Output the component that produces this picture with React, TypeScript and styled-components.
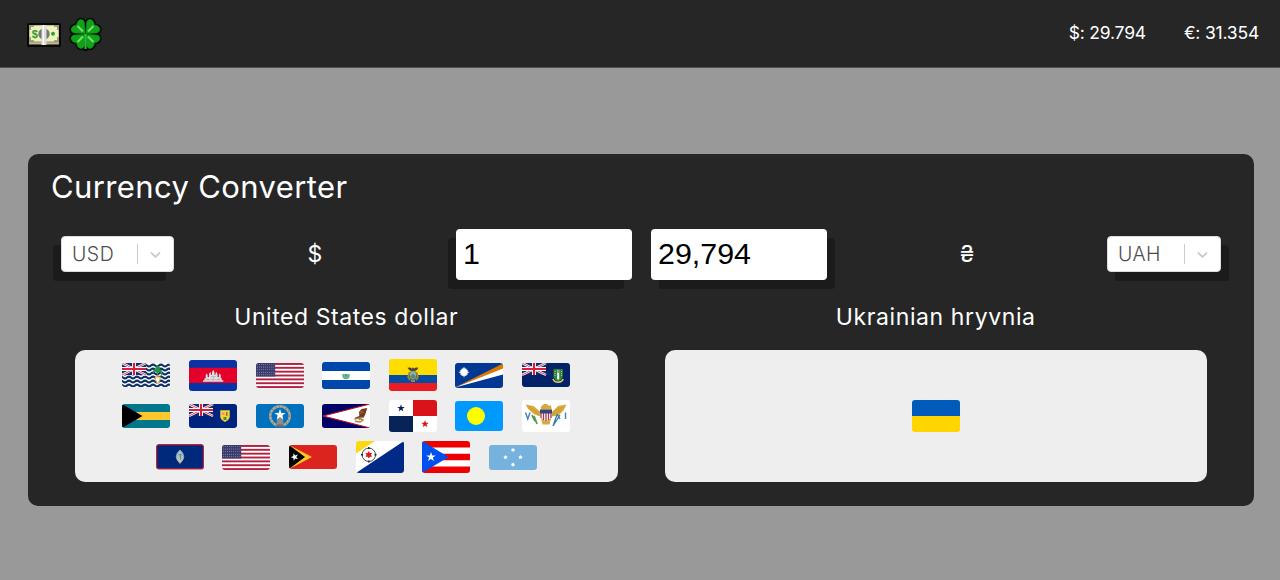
import React from "react";
import styled, { createGlobalStyle } from "styled-components";

const GlobalStyle = createGlobalStyle`
  * { box-sizing: border-box; }
  body {
    margin: 0;
    background: #999;
    color: #fff;
    font-family: Inter, "Open Sans", sans-serif;
  }
`;

const Page = styled.div`
  min-height: 580px;
  overflow: hidden;
`;

const Header = styled.header`
  display: flex;
  align-items: center;
  justify-content: space-between;
  height: 68px;
  padding: 0 21px 0 26px;
  background: #262626;
  border-bottom: 1px solid #505050;
`;

const Logo = styled.div`
  display: flex;
  align-items: center;
  gap: 6px;
  padding-top: 2px;
  svg { display: block; }
`;

const Rates = styled.div`
  display: flex;
  gap: 38px;
  padding-bottom: 3px;
`;

const Rate = styled.span<{ $spacing: number }>`
  font-size: 17.5px;
  font-weight: 400;
  white-space: nowrap;
  letter-spacing: ${(p) => p.$spacing}px;
`;

const Card = styled.main`
  margin: 86px 26px 0 28px;
  height: 351.5px;
  padding: 13px 24px 24px;
  border-radius: 10px;
  background: #262626;
`;

const Title = styled.h1`
  margin: 0;
  height: 40px;
  line-height: 39px;
  font-size: 31px;
  font-weight: 400;
  letter-spacing: 0.38px;
  text-indent: -1px;
`;

const Controls = styled.div`
  display: flex;
  align-items: center;
  justify-content: space-between;
  height: 51px;
  margin: 22px 9px 0;
`;

const Side = styled.div<{ $reverse?: boolean }>`
  display: flex;
  flex: 1 1 0;
  flex-direction: ${(p) => (p.$reverse ? "row-reverse" : "row")};
  align-items: center;
  justify-content: space-between;
  &:first-child { flex-basis: 1px; margin-right: 19px; }
`;

const Select = styled.button<{ $shadow: number }>`
  display: flex;
  align-items: center;
  width: ${(p) => (p.$shadow > 0 ? 114 : 113)}px;
  height: 36px;
  margin-bottom: 1px;
  padding: 0 9px 0 10px;
  border: 1px solid #ddd;
  border-radius: 4px;
  background: #fff;
  color: #4d4d4d;
  font: 300 19.5px Inter, sans-serif;
  letter-spacing: 0.5px;
  box-shadow: ${(p) => p.$shadow}px 9px 0 #1b1b1b;
`;

const Code = styled.span`
  flex: 1;
  text-align: left;
`;

const Divider = styled.span`
  width: 1px;
  height: 20px;
  margin-right: 9px;
  background: #ccc;
`;

const Sign = styled.span`
  font-size: 23px;
  line-height: 30px;
  margin-bottom: 1px;
`;

const Amount = styled.input<{ $shadow: number }>`
  width: 176px;
  height: 51px;
  padding: 0 7px 2px;
  border: 0;
  border-radius: 4px;
  outline: 0;
  background: #fff;
  color: #000;
  font: 30.4px "Liberation Sans", Arial, sans-serif;
  box-shadow: ${(p) => p.$shadow}px 9px 0 #1b1b1b;
`;

const Details = styled.div`
  display: grid;
  grid-template-columns: 1fr 1fr;
  gap: 47px;
  padding: 0 23px;
  margin-top: 22px;
`;

const Name = styled.h2<{ $spacing: number }>`
  margin: 0 0 17px;
  height: 31px;
  line-height: 31px;
  text-align: center;
  font-size: 23px;
  font-weight: 400;
  letter-spacing: ${(p) => p.$spacing}px;
`;

const FlagPanel = styled.div`
  display: flex;
  flex-wrap: wrap;
  align-content: center;
  justify-content: center;
  gap: 9px 18.6px;
  height: 132px;
  padding: 0 40px;
  border-radius: 10px;
  background: #eee;
`;

const FlagSlot = styled.div`
  display: flex;
  align-items: center;
  width: 48px;
  height: 32px;
`;

const FlagSvg = styled.svg`
  display: block;
  border-radius: 3px;
`;

const star = (cx: number, cy: number, r: number, n = 5, inner = 0.4, rot = 0) =>
  Array.from({ length: n * 2 }, (_, i) => {
    const a = (Math.PI * i) / n - Math.PI / 2 + rot;
    const q = i % 2 ? r * inner : r;
    return `${(cx + q * Math.cos(a)).toFixed(2)},${(cy + q * Math.sin(a)).toFixed(2)}`;
  }).join(" ");

const UnionJack = () => (
  <g>
    <path d="M0 0h24v12H0z" fill="#1a2a72" />
    <path d="M0 0L24 12M24 0L0 12" stroke="#fff" strokeWidth="2.5" />
    <path d="M0 0L24 12M24 0L0 12" stroke="#d5304c" strokeWidth="0.9" />
    <path d="M12 0v12M0 6h24" stroke="#fff" strokeWidth="4" />
    <path d="M12 0v12M0 6h24" stroke="#d5203c" strokeWidth="2.2" />
  </g>
);

const Usa = () => (
  <g>
    <path d="M0 0h48v25H0z" fill="#fff" />
    {[0, 1, 2, 3, 4, 5, 6].map((i) => (
      <rect key={i} y={i * 3.85} width="48" height="1.92" fill="#b22240" />
    ))}
    <path d="M0 0h19.2v13.4H0z" fill="#3c3b6e" />
    {Array.from({ length: 45 }, (_, i) => (
      <circle key={i} cx={1.3 + (i % 9) * 2.08} cy={1.4 + Math.floor(i / 9) * 2.6} r="0.45" fill="#c4c3da" />
    ))}
  </g>
);

type Country = { h: number; art: React.ReactNode };

const flags: Record<string, Country> = {
  io: {
    h: 24,
    art: (
      <g>
        <path d="M0 0h48v24H0z" fill="#fff" />
        {[1.5, 5.5, 9.5, 13.5, 17.5, 21.5].map((y) => (
          <path
            key={y}
            d={`M-3 ${y}q2 -1.8 4 0t4 0t4 0t4 0t4 0t4 0t4 0t4 0t4 0t4 0t4 0t4 0t4 0`}
            transform="translate(0 1)"
            stroke="#0d3164"
            strokeWidth="2"
            fill="none"
          />
        ))}
        <UnionJack />
        <path d="M35.7 8v9" stroke="#8b6a35" strokeWidth="1.2" />
        <path d="M35.5 8q-3-3-4 1q3-2 4 1q2-4 4 1q1-5-3-3q2-4-1-5q-3 2 0 6" fill="#279348" stroke="#279348" strokeWidth="1.3" />
        <path d="M33 14h5.5l-1 4-1.8 3-1.7-3z" fill="#fff" stroke="#e6a251" strokeWidth="1" />
        <path d="M34.4 14l1.3-2 1.3 2z" fill="#e88627" />
      </g>
    ),
  },
  kh: {
    h: 31,
    art: (
      <g>
        <path d="M0 0h48v31H0z" fill="#0932a5" />
        <path d="M0 7.8h48v15.2H0z" fill="#e4002b" />
        <path d="M14 21.7v-1.5h1.5v-2h1.2v-3l1-2 1 2v1.8h1.3v-3l1.2-2.2 1 2.2v1h.8v-3l1.3-2 1.2 2v3h.8v-1l1-2.2 1.2 2.2v3h1.3v-1.8l1-2 1 2v3h1v2h1.5v1.5z" fill="#e0e0e0" />
        <path d="M16 19.7h16.5M22 16.5h5M19 18v3M24.3 17v4M29.8 18v3" stroke="#a4a4aa" strokeWidth=".55" />
      </g>
    ),
  },
  us: { h: 25, art: <Usa /> },
  sv: {
    h: 27,
    art: (
      <g>
        <path d="M0 0h48v27H0z" fill="#0047ab" />
        <path d="M0 9h48v9H0z" fill="#fff" />
        <path d="M21 12q-.7 4.500 3 4.700q3.700-.2 3-4.700" fill="#7fc49a" stroke="#55a877" strokeWidth="1.200" />
        <path d="M22.500 14.500l1.500-3 1.500 3z" fill="#438c75" />
      </g>
    ),
  },
  ec: {
    h: 32,
    art: (
      <g>
        <path d="M0 0h48v32H0z" fill="#ffdd00" />
        <path d="M0 16h48v8H0z" fill="#034ea2" />
        <path d="M0 24h48v8H0z" fill="#ed1c24" />
        <path d="M18.5 8.800q3-1 4.500 1q1-3 2 0q1.500-2 4.500-1q-1.500 3-4 3.500h-3q-2.500-.8-4-3.500" fill="#4b4330" />
        <path d="M20.300 13l-1.300 5 2 3M27.700 13l1.300 5-2 3" fill="none" stroke="#b78a2d" strokeWidth="1.400" />
        <ellipse cx="24" cy="16.200" rx="3.500" ry="4.300" fill="#88b4c6" stroke="#7a6931" strokeWidth=".8" />
        <path d="M21.300 17.500l2.700-3 2.800 3-1 2h-3.500z" fill="#5a8b62" />
        <path d="M22 22h4" stroke="#c8994b" strokeWidth="1.300" />
      </g>
    ),
  },
  mh: {
    h: 25,
    art: (
      <g>
        <path d="M0 0h48v25H0z" fill="#003893" />
        <path d="M0 24.500L48 .5v6z" fill="#dd7500" />
        <path d="M0 24.500L48 5.500v6z" fill="#fff" />
        <polygon points={star(9, 9.2, 4.6, 12, 0.75)} fill="#fff" />
        <path d="M9 4v10.400M3.800 9.200h10.400" stroke="#fff" strokeWidth=".7" />
      </g>
    ),
  },
  vg: {
    h: 24,
    art: (
      <g>
        <path d="M0 0h48v24H0z" fill="#012169" />
        <UnionJack />
        <path d="M31.500 6h9.300v7.500q-.5 3.500-4.700 5.300q-4.100-1.800-4.600-5.300z" fill="#278442" />
        <path d="M36.200 7.500v9" stroke="#fff" strokeWidth="2" />
        <path d="M36.200 8v2" stroke="#b77a4e" strokeWidth="1.500" />
        <path d="M33 8v6M39.500 8v6" stroke="#dfc653" strokeWidth="1" strokeDasharray="1 1" />
        <path d="M31 16q1 3 5.200 3.300q4-.3 5.100-3.300" fill="none" stroke="#dfc653" strokeWidth="1.500" />
      </g>
    ),
  },
  bs: {
    h: 24,
    art: (
      <g>
        <path d="M0 0h48v24H0z" fill="#00778b" />
        <path d="M0 8h48v8H0z" fill="#ffc72c" />
        <path d="M0 0l20.500 12L0 24z" />
      </g>
    ),
  },
  tc: {
    h: 24,
    art: (
      <g>
        <path d="M0 0h48v24H0z" fill="#00247d" />
        <UnionJack />
        <path d="M31.500 6.500h9v6.500q-.6 3-4.500 4.800q-4-1.800-4.500-4.800z" fill="#f5d327" stroke="#e0cc76" strokeWidth=".5" />
        <path d="M33 8.500h2.500v2.500H33z" fill="#dc9687" />
        <path d="M37 8h1.500v4H37z" fill="#b56532" />
        <path d="M34.500 13h3v3h-3z" fill="#478f42" />
      </g>
    ),
  },
  mp: {
    h: 24,
    art: (
      <g>
        <path d="M0 0h48v24H0z" fill="#0071bc" />
        <circle cx="24" cy="12" r="9.800" fill="none" stroke="#b6a991" strokeWidth="2.500" />
        <circle cx="24" cy="12" r="9.800" fill="none" stroke="#6e858f" strokeWidth="1.200" strokeDasharray="1.500 2.200" />
        <path d="M21.500 9.500h5l1 11h-7z" fill="#8c8c8c" />
        <path d="M20.500 20.500h7V23h-7z" fill="#686b70" />
        <polygon points={star(24, 10.8, 5.8)} fill="#fff" />
      </g>
    ),
  },
  as: {
    h: 24,
    art: (
      <g>
        <path d="M0 0h48v24H0z" fill="#000066" />
        <path d="M48 0L1 12l47 12z" fill="#fff" stroke="#bd1021" strokeWidth="1.200" />
        <path d="M48 1v22" stroke="#fff" strokeWidth="2" />
        <path d="M37 8l2.500-3 5.700-1-1.400 5-2 4.500-5 .5-4 1.500.5-2 4-1.500z" fill="#6e3b23" />
        <path d="M32.500 15l5-1 3.500 2-3 2-5-.7M37 16l3-3" fill="none" stroke="#a98245" strokeWidth="1.500" />
        <path d="M38 8l3-1M37 10l5-2" stroke="#c48a4b" strokeWidth=".5" />
      </g>
    ),
  },
  pa: {
    h: 32,
    art: (
      <g>
        <path d="M0 0h48v32H0z" fill="#fff" />
        <path d="M24 0h24v16H24z" fill="#da121a" />
        <path d="M0 16h24v16H0z" fill="#072357" />
        <polygon points={star(12, 8.2, 4)} fill="#072357" />
        <polygon points={star(36, 24, 4)} fill="#da121a" />
      </g>
    ),
  },
  pw: {
    h: 30,
    art: (
      <g>
        <path d="M0 0h48v30H0z" fill="#0099ff" />
        <circle cx="21" cy="15" r="9" fill="#ffff00" />
      </g>
    ),
  },
  vi: {
    h: 32,
    art: (
      <g>
        <path d="M0 0h48v32H0z" fill="#fff" />
        <path d="M3.500 4.500l8 1.500 7 6 .500-5.500 3-2.500h3l2 2 2-1 1 7 6-6 8.500-1.500-3 6-5 5-7 1-2 8h-7l-2-8-6-2-6-5z" fill="#d8aa3d" />
        <path d="M7 7l11 6M9 10l9 5M41 7l-11 6M39 10l-9 5" stroke="#b9902f" strokeWidth=".5" />
        <path d="M18 9.500h12v5.500q-.5 4-6 6q-5.500-2-6-6z" fill="#fff" />
        <path d="M19 13v5M21.500 13v7M24 13v8M26.500 13v7M29 13v5" stroke="#a23d51" strokeWidth="1.300" />
        <path d="M18 9.500h12v4H18z" fill="#39427a" />
        <path d="M12 16l3 8M10 15l3 6" stroke="#549b54" strokeWidth="1.800" />
        <path d="M35 15l-4 11M38 15l-7 11M35 14l3 5" stroke="#347aa6" strokeWidth="1.300" />
        <path d="M3.500 12.500l2.300 6.500L8 12.500M43.500 12.500v6.500" fill="none" stroke="#3c89b5" strokeWidth="1.400" />
      </g>
    ),
  },
  gu: {
    h: 25.5,
    art: (
      <g>
        <rect x=".6" y=".6" width="46.800" height="24.300" rx="2" fill="#00297b" stroke="#c62139" strokeWidth="1.200" />
        <path d="M24 6q7.500 6.500 0 13.500q-7.500-7 0-13.500" fill="#94c8dd" stroke="#b5acac" strokeWidth=".8" />
        <path d="M21.300 14.500q2.500-1 5.500 0l-2.800 4z" fill="#d8c49a" />
        <path d="M24.500 16V10M22.500 11q2.500-2 3.500.5" stroke="#4c7a58" strokeWidth=".7" fill="none" />
      </g>
    ),
  },
  tl: {
    h: 24,
    art: (
      <g>
        <path d="M0 0h48v24H0z" fill="#dc241f" />
        <path d="M0 0l23 12L0 24z" fill="#ffc726" />
        <path d="M0 0l16 12L0 24z" />
        <polygon points={star(5.7, 12, 4, 5, 0.4, -0.35)} fill="#fff" />
      </g>
    ),
  },
  bq: {
    h: 32,
    art: (
      <g>
        <path d="M0 0h48v32H0z" fill="#fff" />
        <path d="M48 0v32H0z" fill="#012a87" />
        <path d="M0 0h19L0 12.500z" fill="#f9d90f" />
        <circle cx="12.800" cy="13.800" r="6.700" fill="none" stroke="#333" strokeWidth=".9" />
        <path d="M12.800 6v2M12.800 19.500v2M5 13.800h2M18.500 13.800h2" stroke="#222" strokeWidth="1.500" />
        <polygon points={star(12.8, 13.8, 3.8, 6, 0.58)} fill="#dc171d" />
      </g>
    ),
  },
  pr: {
    h: 32,
    art: (
      <g>
        <path d="M0 0h48v32H0z" fill="#ed0000" />
        <path d="M0 6.400h48v6.400H0zM0 19.200h48v6.400H0z" fill="#fff" />
        <path d="M0 0l26.500 16L0 32z" fill="#0050f0" />
        <polygon points={star(9, 16, 5)} fill="#fff" />
      </g>
    ),
  },
  fm: {
    h: 25,
    art: (
      <g>
        <path d="M0 0h48v25H0z" fill="#75b2dd" />
        {[[24, 5], [31.5, 12.3], [24, 19.6], [16.5, 12.3]].map(([x, y]) => (
          <polygon key={`${x}-${y}`} points={star(x, y, 2.2, 5, 0.6)} fill="#fff" />
        ))}
      </g>
    ),
  },
  ua: {
    h: 32,
    art: (
      <g>
        <path d="M0 0h48v16H0z" fill="#005bbb" />
        <path d="M0 16h48v16H0z" fill="#ffd500" />
      </g>
    ),
  },
};

const dollarFlags = [
  "io", "kh", "us", "sv", "ec", "mh", "vg",
  "bs", "tc", "mp", "as", "pa", "pw", "vi",
  "gu", "us", "tl", "bq", "pr", "fm",
];

const Flag = ({ code }: { code: string }) => {
  const { h, art } = flags[code];
  return (
    <FlagSlot>
      <FlagSvg width="48" height={h} viewBox={`0 0 48 ${h}`}>{art}</FlagSvg>
    </FlagSlot>
  );
};

const Money = () => (
  <svg width="36" height="26" viewBox="0 0 36 26">
    <rect x="1" y="1" width="34" height="24" rx="1.500" fill="#080808" />
    <path d="M3 3h30v19H3z" fill="#c0bd91" />
    <path d="M4 4h28v15H4z" fill="#eef3bd" />
    <path d="M4 8V4h4M28 4h4v4M4 15v4h4M28 19h4v-4" fill="none" stroke="#8d8c70" strokeWidth="1.600" />
    <path d="M3 20.500h30M3 22.300h30" stroke="#a5a482" strokeWidth=".7" />
    <circle cx="18" cy="12" r="5.700" fill="#77776f" />
    <text x="5.700" y="15.800" fontSize="11" fontWeight="700" fill="#2f9a32" fontFamily="Liberation Sans, sans-serif">$</text>
    <circle cx="27" cy="11.800" r="2" fill="#31a239" />
    <path d="M15.500 3h5v20h-5z" fill="#dcdce2" />
    <path d="M17.300 3v20" stroke="#fff" strokeWidth="1.200" />
  </svg>
);

const Leaves = () => (
  <g>
    {[0, 90, 180, 270].map((turn) => (
      <g key={turn} transform={`rotate(${turn} 17.5 17)`}>
        <path d="M17.200 16.700L16.400 6C16.200 1.500 9.500.8 8.600 8.100C1.300 9 2 15.700 6.500 15.900z" />
      </g>
    ))}
  </g>
);

const Clover = () => (
  <svg width="36" height="36" viewBox="0 0 36 36">
    <g fill="#060906" stroke="#060906" strokeWidth="3.600" strokeLinejoin="round">
      <Leaves />
      <path d="M17.500 17v15" strokeWidth="5" strokeLinecap="round" />
    </g>
    <g fill="#10a318" stroke="#0d8a14" strokeWidth=".6"><Leaves /></g>
    <path d="M17.500 17v15" stroke="#35b63a" strokeWidth="2" />
    <path d="M9.500 9l5.500 5.500M25.500 9L20 14.500M9.500 25l5.500-5.500M25.500 25L20 19.500" stroke="#74df70" strokeWidth="2" />
  </svg>
);

const CurrencySelect = ({ code, shadow }: { code: string; shadow: number }) => (
  <Select $shadow={shadow}>
    <Code>{code}</Code>
    <Divider />
    <svg width="17" height="17" viewBox="0 0 20 20" fill="#ccc">
      <path d="M4.516 7.548c0.436-0.446 1.043-0.481 1.576 0l3.908 3.747 3.908-3.747c0.533-0.481 1.141-0.446 1.574 0 0.436 0.445 0.408 1.197 0 1.615-0.406 0.418-4.695 4.502-4.695 4.502-0.217 0.223-0.502 0.335-0.787 0.335s-0.570-0.112-0.789-0.335c0 0-4.287-4.084-4.695-4.502s-0.436-1.170 0-1.615z" />
    </svg>
  </Select>
);

export default function App() {
  return (
    <Page>
      <GlobalStyle />
      <Header>
        <Logo><Money /><Clover /></Logo>
        <Rates>
          <Rate $spacing={-0.2}>$: 29.794</Rate>
          <Rate $spacing={-0.2}>€: 31.354</Rate>
        </Rates>
      </Header>
      <Card>
        <Title>Currency Converter</Title>
        <Controls>
          <Side>
            <CurrencySelect code="USD" shadow={-8} />
            <Sign>$</Sign>
            <Amount $shadow={-8} defaultValue="1" />
          </Side>
          <Side $reverse>
            <CurrencySelect code="UAH" shadow={8} />
            <Sign>₴</Sign>
            <Amount $shadow={8} defaultValue="29,794" />
          </Side>
        </Controls>
        <Details>
          <section>
            <Name $spacing={0.56}>United States dollar</Name>
            <FlagPanel>{dollarFlags.map((code, i) => <Flag key={i} code={code} />)}</FlagPanel>
          </section>
          <section>
            <Name $spacing={0.6}>Ukrainian hryvnia</Name>
            <FlagPanel><Flag code="ua" /></FlagPanel>
          </section>
        </Details>
      </Card>
    </Page>
  );
}
